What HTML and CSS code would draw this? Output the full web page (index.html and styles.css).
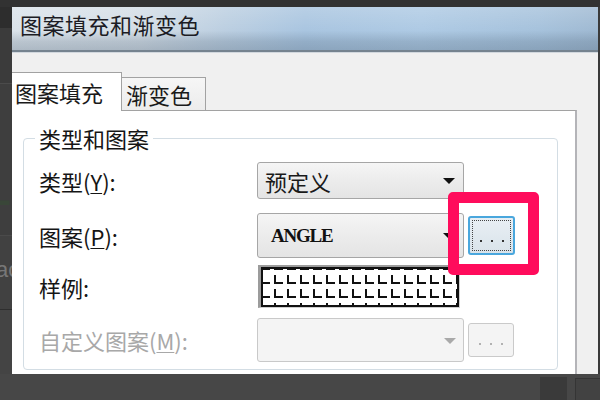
FILE: index.html
```html
<!DOCTYPE html>
<html lang="zh-CN">
<head>
<meta charset="utf-8">
<title>图案填充和渐变色</title>
<link rel="stylesheet" href="styles.css">
</head>
<body>
<div class="screen">
  <div class="topstrip"></div>
  <div class="middle">
    <div class="side">
      <div class="s1"></div>
      <div class="s2"></div>
      <div class="s3"><span class="big1">1</span></div>
      <div class="s4"><span class="ac">ac</span></div>
      <div class="s5"></div>
    </div>
    <div class="dialog">
      <div class="titlebar"><span class="title">图案填充和渐变色</span></div>
      <div class="dbody">
        <div class="tabs">
          <div class="tab active">图案填充</div>
          <div class="tab">渐变色</div>
        </div>
        <div class="panel">
          <fieldset class="group">
            <legend>类型和图案</legend>
            <div class="row r1">
              <div class="label">类型(<u>Y</u>):</div>
              <div class="combo"><span class="ctext">预定义</span><span class="arrow"></span></div>
            </div>
            <div class="row r2">
              <div class="label">图案(<u>P</u>):</div>
              <div class="combo tall"><span class="ctext angle">ANGLE</span><span class="arrow"></span></div>
              <div class="btn focus"><span class="dot"></span><span class="dot"></span><span class="dot"></span></div>
            </div>
            <div class="row r3">
              <div class="label">样例:</div>
              <div class="sample">
                <div class="sample-in">
                  <svg width="198" height="37" viewBox="0 0 198 37">
                    <defs>
                      <pattern id="hatch" x="-2" y="6" width="13" height="14" patternUnits="userSpaceOnUse">
                        <rect x="0" y="0" width="2" height="9" fill="#111"/>
                        <rect x="0" y="7" width="9" height="2" fill="#111"/>
                      </pattern>
                    </defs>
                    <rect width="198" height="37" fill="url(#hatch)"/>
                  </svg>
                </div>
              </div>
            </div>
            <div class="row r4">
              <div class="label disabled">自定义图案(<u>M</u>):</div>
              <div class="combo off"><span class="arrow"></span></div>
              <div class="btn off"><span class="dot"></span><span class="dot"></span><span class="dot"></span></div>
            </div>
          </fieldset>
        </div>
      </div>
    </div>
    <div class="edge"></div>
  </div>
  <div class="bottom">
    <div class="blk1"></div>
    <div class="blk2"></div>
  </div>
  <div class="highlight"></div>
</div>
</body>
</html>
```
FILE: styles.css
```css
* { box-sizing: border-box; }
html, body { margin: 0; padding: 0; }
body {
  width: 600px; height: 400px; overflow: hidden;
  background: #474747;
  font-family: "Noto Sans CJK SC", "Noto Sans", sans-serif;
}
.screen { position: relative; width: 600px; height: 400px; }
.topstrip { height: 7px; background: #323232; }
.middle { display: flex; height: 367px; }

.side { width: 12px; display: flex; flex-direction: column; overflow: hidden; background: #414141; }
.s1 { height: 21px; background: #2d2d2d; }
.s2 { height: 56px; background: #3b3b3b; border-bottom: 1px solid #4b4b4b; }
.s3 { height: 152px; background: #3e3e3e; border-bottom: 1px solid #4a4a4a; padding-top: 72px; }
.big1 { display: block; font-family: "Liberation Sans", sans-serif; font-size: 62px; line-height: 56px; color: #394638; margin-left: -22px; }
.s4 { height: 74px; background: #414141; border-bottom: 1px solid #2e2e2e; padding-top: 22px; overflow: hidden; }
.ac { display: block; font-family: "Liberation Sans", sans-serif; font-size: 22px; line-height: 24px; color: #777; margin-left: -4px; }
.s5 { flex: 1; background: #444; }

.dialog { width: 586px; background: #f0f0f0; display: flex; flex-direction: column; overflow: hidden; }
.edge { width: 2px; background: #3a3a3a; }

.titlebar {
  height: 45px;
  display: flex; align-items: center;
  padding: 0 0 9px 8px;
  border-bottom: 2px solid #75838f;
  box-shadow: 0 1px 0 #d2d8de;
  background:
    linear-gradient(to bottom, rgba(255,255,255,0.18) 0%, rgba(255,255,255,0) 55%, rgba(70,90,110,0.22) 80%, rgba(70,90,110,0.30) 100%),
    linear-gradient(to right, #dbe3ea 0%, #d3dde6 22%, #bccfe1 36%, #a9c5e0 50%, #aecae4 70%, #a6c2dc 90%, #9fb9d2 100%);
}
.title { font-size: 22px; line-height: 28px; color: #1c1c24; letter-spacing: 0.5px; }

.dbody { flex: 1; padding-top: 20px; display: flex; flex-direction: column; }
.tabs { display: flex; align-items: flex-end; height: 38px; position: relative; z-index: 1; }
.tab {
  font-size: 22px; line-height: 28px; color: #1a1a1a;
  border: 1px solid #a2a2a2; border-bottom: none;
  display: flex; align-items: center;
}
.tab.active { width: 110px; height: 39px; margin-bottom: -1px; background: #fff; padding-left: 3px; border-left: none; }
.tab:not(.active) { width: 85px; height: 33px; margin-left: -1px; padding-left: 4px; background: linear-gradient(#f6f6f6, #ececec); }

.panel {
  flex: 1; margin-right: 21px; background: #fff;
  border-top: 1px solid #a2a2a2; border-right: 2px solid #b4b4b8;
  padding: 13px 0 0 11px;
}

.group {
  margin: 0; width: 535px;
  border: 1px solid #d3dde4; border-radius: 4px;
  padding: 10px 0 7px 15px;
}
.group legend { font-size: 22px; line-height: 28px; color: #151515; padding: 0 4px; margin-left: -4px; }

.row { display: flex; align-items: center; }
.r1 { height: 37px; }
.r2 { height: 45px; margin-top: 14px; }
.r3 { height: 43px; margin-top: 7px; }
.r4 { height: 44px; margin-top: 10px; }

.label { width: 218px; font-size: 22px; line-height: 28px; color: #151515; }
.label u { text-decoration-thickness: 1px; text-underline-offset: 2px; }
.label.disabled { color: #a8a8a8; }

.combo {
  width: 207px; height: 100%;
  border: 1px solid #a6a6a6; border-radius: 3px;
  background: linear-gradient(#f5f5f5, #ececec 50%, #e4e4e4 100%);
  display: flex; align-items: center; padding-left: 7px;
}
.ctext { font-size: 22px; line-height: 28px; color: #1a1a1a; }
.ctext.angle { font-family: "Liberation Serif", serif; font-weight: bold; font-size: 19px; letter-spacing: -1.2px; padding-left: 6px; color: #111; }
.arrow {
  margin-left: auto; margin-right: 8px;
  width: 0; height: 0;
  border-left: 6px solid transparent; border-right: 6px solid transparent;
  border-top: 6px solid #111;
}
.combo.off { background: #f4f4f4; border-color: #c9c9c9; }
.combo.off .arrow { border-top-color: #a9a9a9; margin-right: 7px; margin-top: 2px; }

.btn {
  margin-left: 4px; width: 47px;
  border-radius: 3px;
  display: flex; justify-content: center; align-items: flex-end; gap: 9px;
}
.btn.focus {
  height: 39px;
  border: 2px solid #4aa7dd;
  background: linear-gradient(#e9eff4, #d9e3ea);
  outline: 1px dotted #444; outline-offset: -5px;
  padding-bottom: 11px;
}
.btn.focus .dot { width: 2px; height: 2px; background: #333; }
.btn.off {
  height: 34px; width: 46px;
  border: 1px solid #cacaca; background: #f4f4f4;
  padding-bottom: 11px;
}
.btn.off .dot { width: 2px; height: 2px; background: #b2b2b2; }

.sample {
  width: 202px; height: 43px; margin-left: 1px;
  border-top: 2px solid #9c9c9c; border-left: 3px solid #9c9c9c;
  border-right: 1px solid #cfcfcf; border-bottom: 1px solid #cfcfcf;
}
.sample-in { width: 100%; height: 100%; border: 2px solid #111; background: #fff; overflow: hidden; }
.sample-in svg { display: block; }

.bottom { height: 26px; display: flex; }
.blk1 { width: 27px; height: 23px; margin: 3px 0 0 auto; background: #3a3a3a; }
.blk2 { width: 25px; margin: 4px 0 0 8px; background: #424242; border-left: 1px solid #353535; border-top: 1px solid #353535; }

.highlight {
  position: absolute; left: 448px; top: 192px; width: 91px; height: 83px;
  border: 11px solid #ff0c5c; border-radius: 5px;
}
```
